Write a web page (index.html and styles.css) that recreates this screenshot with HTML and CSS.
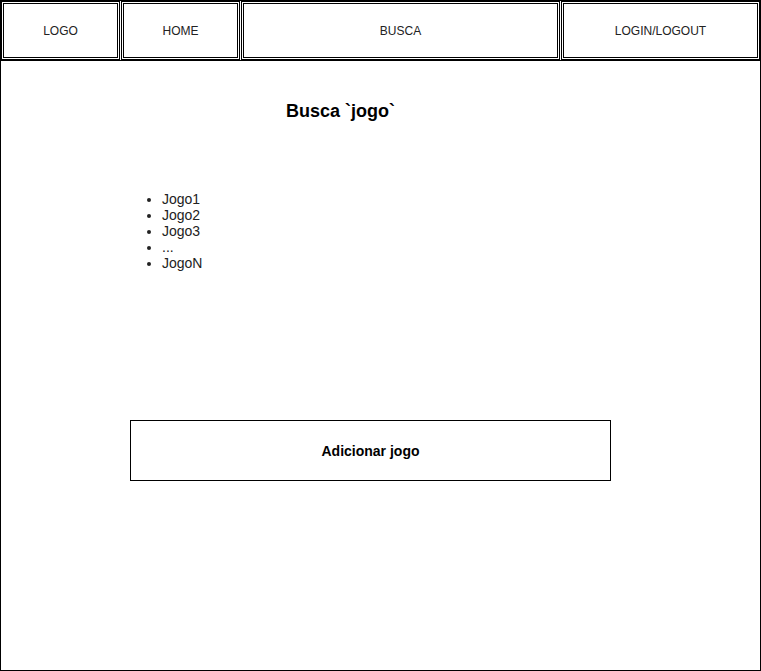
FILE: index.html
```html
<!DOCTYPE html>
<html lang="pt">
<head>
<meta charset="utf-8">
<title>Busca</title>
<link rel="stylesheet" href="styles.css">
</head>
<body>
<div class="frame">
  <header class="header">
    <div class="cell cell-logo">LOGO</div>
    <div class="cell cell-home">HOME</div>
    <div class="cell cell-busca">BUSCA</div>
    <div class="cell cell-login">LOGIN/LOGOUT</div>
  </header>
  <main class="main">
    <h1 class="title">Busca `jogo`</h1>
    <ul class="results">
      <li>Jogo1</li>
      <li>Jogo2</li>
      <li>Jogo3</li>
      <li>...</li>
      <li>JogoN</li>
    </ul>
    <div class="add-btn">Adicionar jogo</div>
  </main>
</div>
</body>
</html>
```

FILE: styles.css
```css
html, body {
  margin: 0;
  padding: 0;
  background: #ffffff;
}

body {
  font-family: "Liberation Sans", Arial, sans-serif;
  color: #000;
}

.frame {
  box-sizing: border-box;
  width: 761px;
  height: 671px;
  border: 1px solid #000;
  display: flex;
  flex-direction: column;
}

.header {
  display: grid;
  grid-template-columns: 119px 119px 319px 199px;
  column-gap: 1px;
  height: 60px;
  box-sizing: border-box;
  border-bottom: 1px solid #000;
}

.cell {
  box-sizing: border-box;
  border: 3px double #000;
  display: flex;
  align-items: center;
  justify-content: center;
  font-size: 12px;
  color: #222;
}

.main {
  display: flex;
  flex-direction: column;
  align-items: flex-start;
}

.title {
  margin: 40px 0 0 0;
  width: 679px;
  text-align: center;
  font-size: 18px;
  line-height: 20px;
  font-weight: bold;
  color: #000;
}

.results {
  margin: 70px 0 0 0;
  padding-left: 161px;
  font-size: 14px;
  line-height: 16px;
  color: #222;
}

.add-btn {
  box-sizing: border-box;
  margin: 149px 0 0 129px;
  width: 481px;
  height: 61px;
  border: 1px solid #000;
  display: flex;
  align-items: center;
  justify-content: center;
  font-size: 14px;
  font-weight: bold;
  color: #000;
}
```
